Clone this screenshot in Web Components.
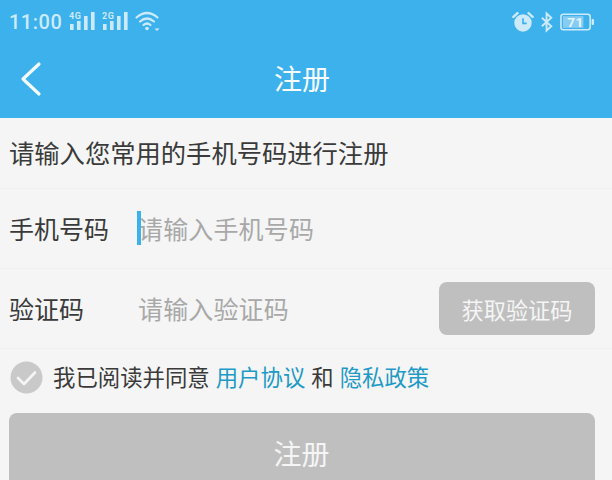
<!DOCTYPE html>
<html lang="zh"><head><meta charset="utf-8">
<style>
html,body{margin:0;padding:0;height:480px;overflow:hidden;background:#f5f5f5}
body{font-family:"Noto Sans CJK SC","Roboto",sans-serif;color:#333}
</style></head><body>
<app-screen>
  <app-header title="注册"></app-header>
  <intro-row>请输入您常用的手机号码进行注册</intro-row>
  <form-row label="手机号码" placeholder="请输入手机号码" caret></form-row>
  <form-row label="验证码" placeholder="请输入验证码"><sms-button slot="action">获取验证码</sms-button></form-row>
  <agree-row></agree-row>
  <submit-button>注册</submit-button>
</app-screen>
<script>
function def(name,html){
  customElements.define(name,class extends HTMLElement{
    connectedCallback(){
      if(this.shadowRoot)return;
      const r=this.attachShadow({mode:'open'});
      r.innerHTML=typeof html==='function'?html(this):html;
    }
  });
}
def('app-screen',`<style>:host{display:flex;flex-direction:column;width:612px;height:480px;overflow:hidden}</style><slot></slot>`);
const bars=`<g fill="#cdeafb"><rect x="1" y="13" width="3.600" height="6"/><rect x="8" y="10" width="3.600" height="9"/><rect x="15" y="5" width="3.600" height="14"/><rect x="22" y="1" width="3.600" height="18"/></g>`;
def('status-bar',`<style>
:host{display:flex;align-items:center;box-sizing:border-box;height:42px;padding:2px 17px 0 9px;color:#cdeafb;font:500 20px/1 Roboto,sans-serif;letter-spacing:.5px}
.l{display:flex;align-items:center;gap:7px}
.r{margin-left:auto;display:flex;align-items:center;gap:7px}
svg{display:block}
.sig{margin-top:-2px}
.bat{font:700 14px/1 Roboto,sans-serif;fill:#e4f4fd}
</style>
<div class="l"><span>11:00</span>
<svg class="sig" width="26" height="20" viewBox="0 0 26 20"><text x="0" y="8" font-family="Roboto" font-size="9" font-weight="700" fill="#cdeafb">4G</text>${bars}</svg>
<svg class="sig" width="26" height="20" viewBox="0 0 26 20"><text x="0" y="8" font-family="Roboto" font-size="9" font-weight="700" fill="#cdeafb">2G</text>${bars}</svg>
<svg class="sig" width="26" height="20" viewBox="0 0 26 20" fill="none" stroke="#cdeafb" stroke-width="2.200" stroke-linecap="round"><path d="M1.500 6.500Q12-2.500 22.500 6.500"/><path d="M5 10.500Q12 4.500 19 10.500"/><path d="M8.500 14Q12 11 15.500 14"/><circle cx="12" cy="17.500" r="1.800" fill="#cdeafb" stroke="none"/><path d="M19.500 17.500h5l-2.500 2.500z" fill="#cdeafb" stroke="none"/></svg>
</div>
<div class="r">
<svg width="22" height="22" viewBox="0 0 24 24"><circle cx="12" cy="13" r="9.500" fill="#cdeafb"/><path d="M12 8v5.500h4" fill="none" stroke="#3cb1ec" stroke-width="1.800"/><path d="M1.500 6.500 6 2.200M22.500 6.500 18 2.200" stroke="#cdeafb" stroke-width="2.600" stroke-linecap="round"/></svg>
<svg width="12" height="22" viewBox="0 0 14 24" fill="none" stroke="#cdeafb" stroke-width="2.200"><path d="M1 7l11 10-5.500 5V2L12 7 1 17"/></svg>
<svg width="35" height="18" viewBox="0 0 36 18"><rect x="1" y="1" width="30" height="16" rx="2.500" fill="none" stroke="#cdeafb" stroke-width="1.600"/><rect x="3" y="3" width="21" height="12" fill="#86ccf2"/><rect x="32.500" y="6" width="2.500" height="6" rx="1" fill="#cdeafb"/><text class="bat" x="16" y="14" text-anchor="middle">71</text></svg>
</div>`);
def('app-header',h=>`<style>
:host{display:block;background:#3cb1ec;height:118px;flex:none}
.nav{height:76px;display:flex;align-items:center;justify-content:center;position:relative;color:#f8fcff;font-size:28px;line-height:1;padding-right:8px;padding-bottom:4px;box-sizing:border-box}
svg{position:absolute;left:20px;top:19px}
</style><status-bar></status-bar>
<div class="nav"><svg width="24" height="36" viewBox="0 0 24 36" fill="none" stroke="#f4fbff" stroke-width="3.200" stroke-linecap="round" stroke-linejoin="round"><path d="M19 3 3 18l16 15"/></svg><span>${h.getAttribute('title')}</span></div>`);
def('intro-row',`<style>:host{display:flex;align-items:center;box-sizing:border-box;height:71px;padding-bottom:2px;flex:none;padding-left:9px;font-size:25.300px;color:#3a3a3a;border-bottom:1px solid #f0f0f0}</style><slot></slot>`);
def('form-row',h=>`<style>
:host{display:flex;align-items:center;box-sizing:border-box;height:80px;flex:none;padding:0 17px 2px 9px;border-bottom:1px solid #f0f0f0;font-size:25px;color:#3a3a3a}
.lab{width:129px;flex:none}
.ph{color:#a8a8a8;position:relative;letter-spacing:.15px}
.caret{position:absolute;left:-1px;top:1px;width:4px;height:34px;background:#3cb1ec}
::slotted(*){margin-left:auto;margin-top:2px}
</style><span class="lab">${h.getAttribute('label')}</span><span class="ph">${h.hasAttribute('caret')?'<i class="caret"></i>':''}${h.getAttribute('placeholder')}</span><slot name="action"></slot>`);
def('sms-button',`<style>:host{display:flex;align-items:center;justify-content:center;width:156px;height:53px;background:#bfbfbf;border-radius:8px;color:#f5f5f5;font-size:22.200px}</style><slot></slot>`);
def('agree-row',`<style>
:host{display:flex;align-items:center;box-sizing:border-box;height:57px;flex:none;padding:0 0 3px 11px;font-size:22.400px;color:#3a3a3a}
svg{margin-right:10px;flex:none;margin-top:2px;margin-left:-1px}
a{color:#1e9ac6;text-decoration:none}
.s{margin:0 6px}
</style><svg width="33" height="33" viewBox="0 0 33 33"><circle cx="16.500" cy="16.500" r="16" fill="#c9c9c9"/><path d="M8 17l6 6L25 11.500" fill="none" stroke="#f5f5f5" stroke-width="2.600" stroke-linecap="round" stroke-linejoin="round"/></svg>
<span>我已阅读并同意</span><a style="margin-left:6px">用户协议</a><span class="s">和</span><a>隐私政策</a>`);
def('submit-button',`<style>:host{display:flex;align-items:center;justify-content:center;flex:none;box-sizing:border-box;height:80px;margin:7px 17px 0 9px;background:#bfbfbf;border-radius:8px;color:#f5f5f5;font-size:28px;padding-right:1px}</style><slot></slot>`);
</script>
</body></html>
